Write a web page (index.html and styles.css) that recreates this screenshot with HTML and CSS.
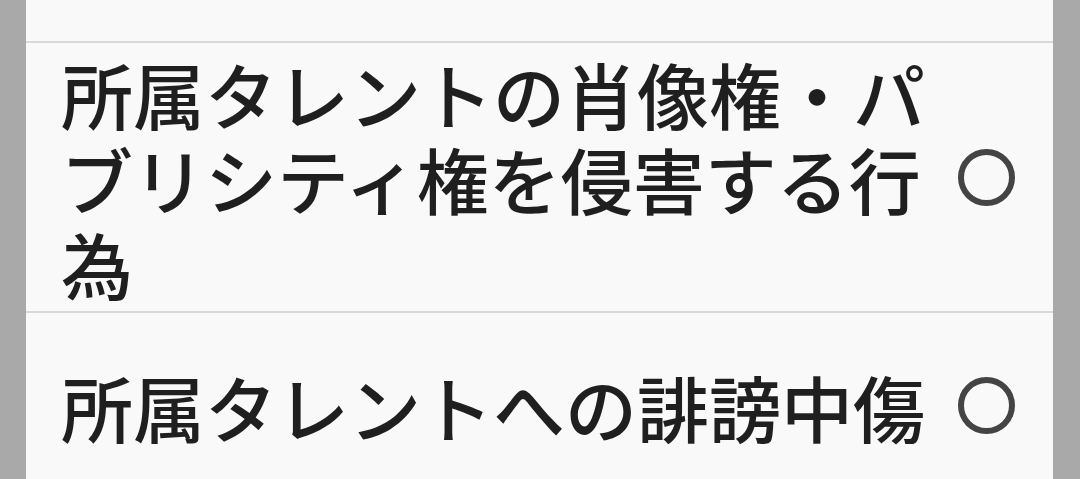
FILE: index.html
```html
<!DOCTYPE html>
<html lang="ja">
<head>
<meta charset="utf-8">
<link rel="stylesheet" href="styles.css">
</head>
<body>
<div class="panel">
  <div class="row row-top"></div>
  <div class="row row-multi">
    <div class="label">所属タレントの肖像権・パブリシティ権を侵害する行為</div>
    <div class="radio"></div>
  </div>
  <div class="row row-single">
    <div class="label">所属タレントへの誹謗中傷</div>
    <div class="radio"></div>
  </div>
</div>
</body>
</html>
```
FILE: styles.css
```css
html, body {
  margin: 0;
  padding: 0;
  height: 100%;
  overflow: hidden;
}
body {
  background: #a9a9a9;
  font-family: "Noto Sans CJK JP", "Noto Sans", sans-serif;
}
.panel {
  margin: 0 27px 0 26px;
  background: #f9f9f9;
  height: 100%;
}
.row {
  display: flex;
  align-items: center;
  border-bottom: 2px solid #d9d9d9;
  padding: 0 38px 0 35px;
  box-sizing: border-box;
}
.row-top {
  height: 43px;
}
.row-multi {
  height: 270px;
}
.row-single {
  height: 186px;
}
.label {
  flex: 1;
  font-size: 72px;
  font-weight: 500;
  line-height: 85px;
  color: #1f1f1f;
  margin-right: 8px;
}
.radio {
  width: 57px;
  height: 57px;
  box-sizing: border-box;
  border: 6px solid #444444;
  border-radius: 50%;
  flex: none;
}
```
